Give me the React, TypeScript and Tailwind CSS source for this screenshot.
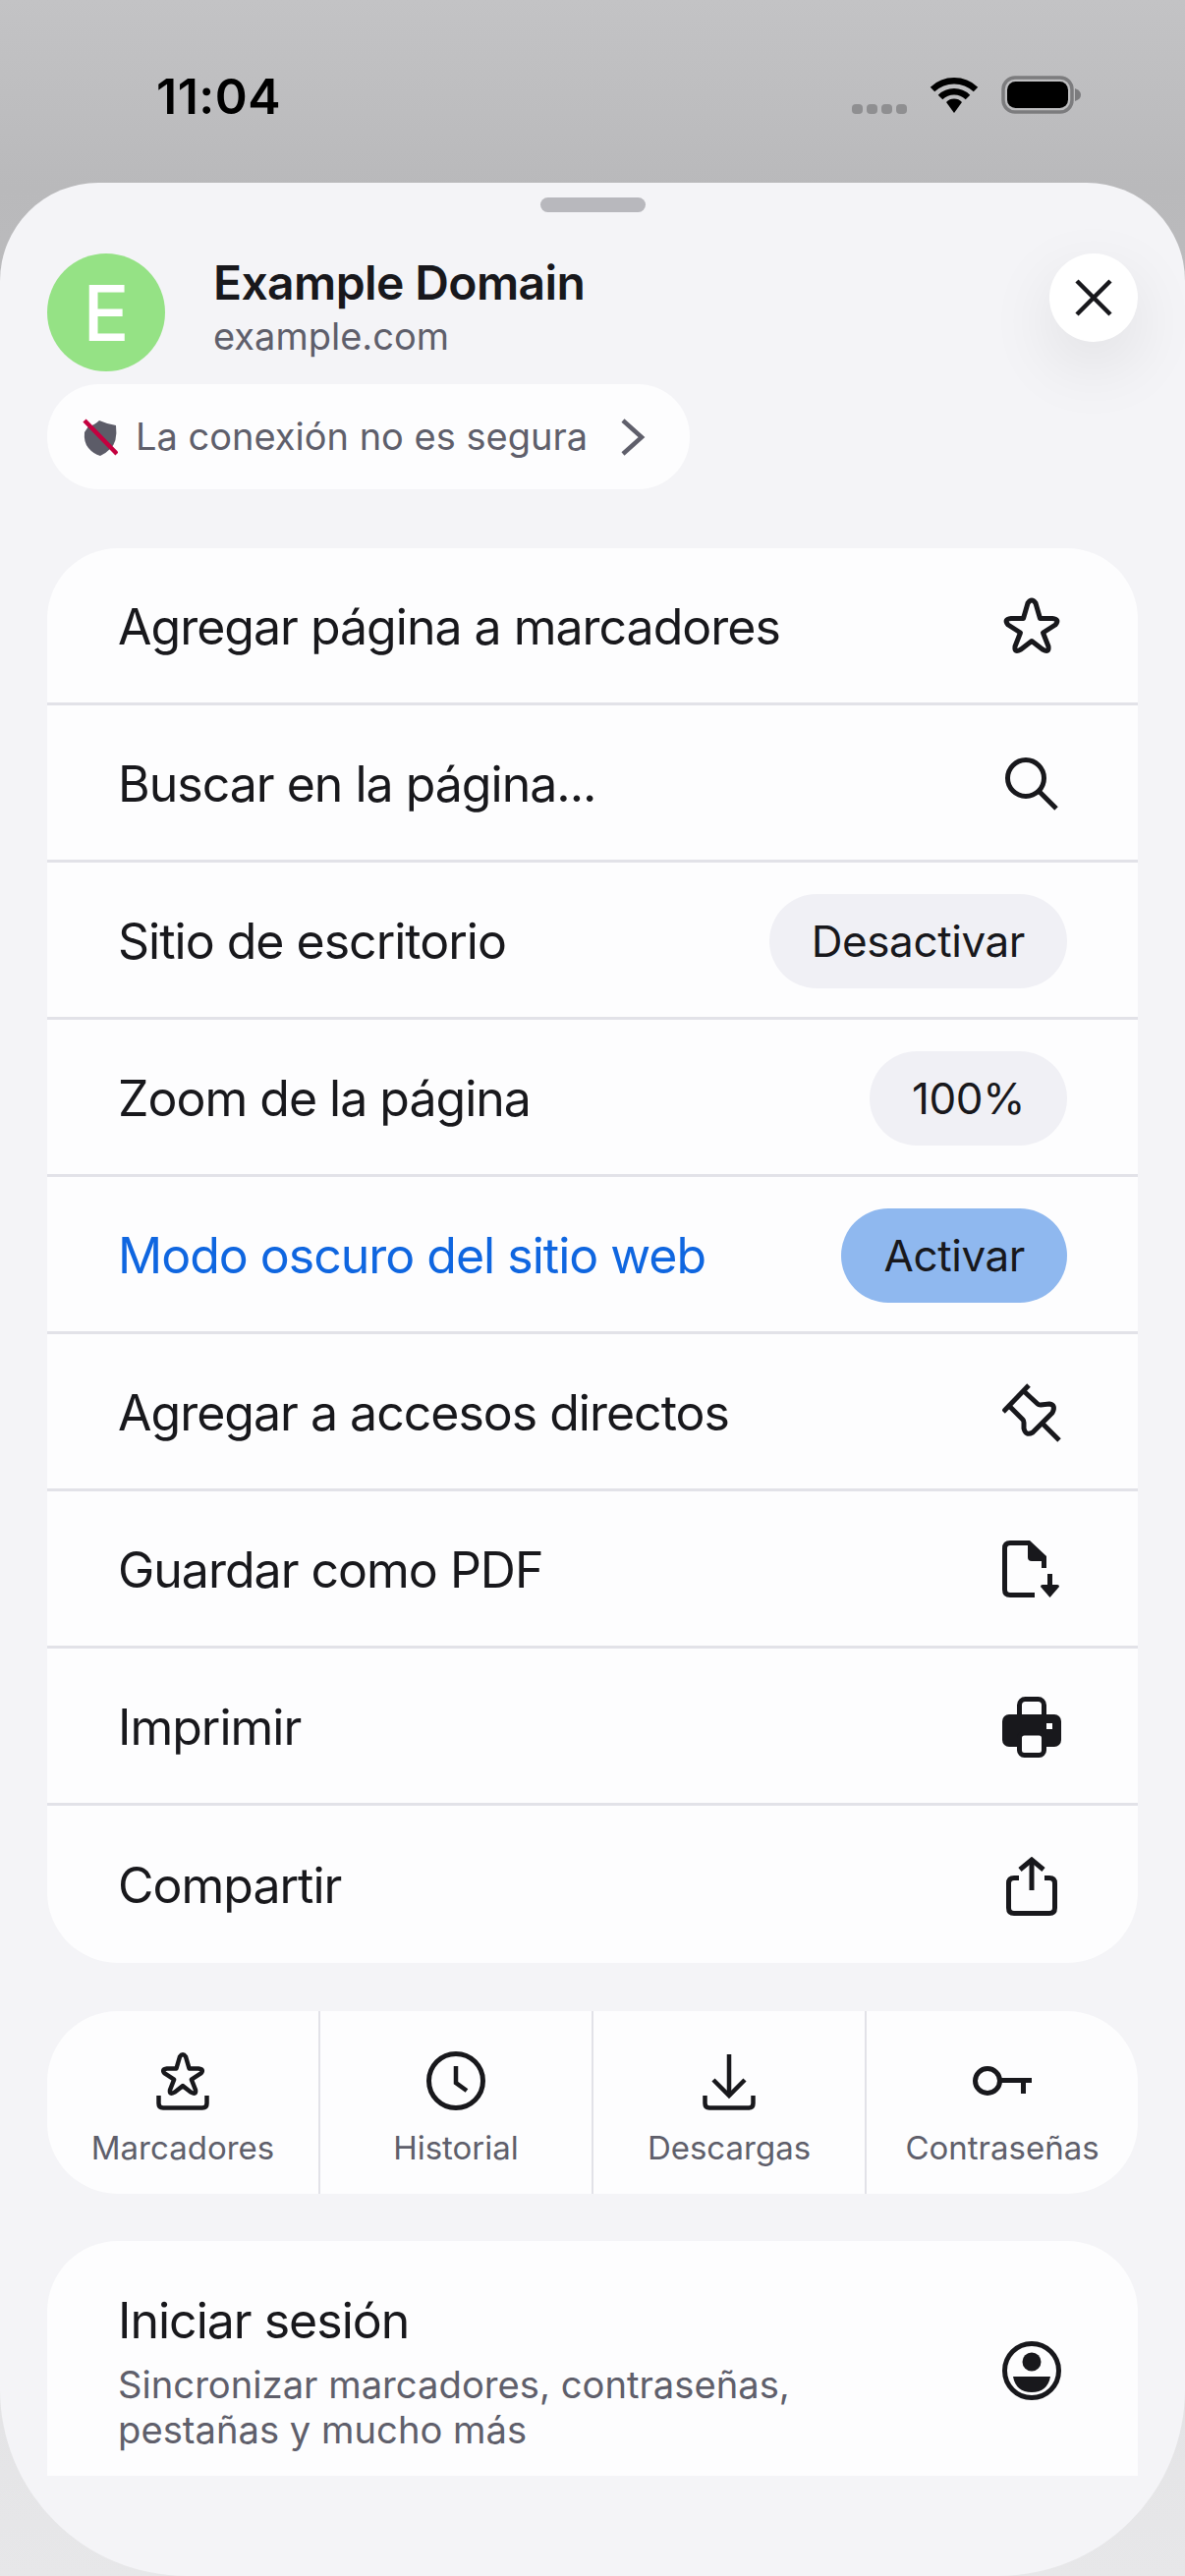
import React from "react";

const INK = "#18181c";
const STAR =
  "M26 6 Q30 0 34 6 L38.5 21.5 L51 21.5 Q59 22.5 54 28 L41.5 36 L47 50 Q48 57 41 53 L30 44.5 L19 53 Q12 57 13 50 L18.5 36 L6 28 Q1 22.5 9 21.5 L21.5 21.5 Z";

function Star() {
  return (
    <svg width="60" height="60" viewBox="0 0 60 60" fill="none" stroke={INK} strokeWidth="5" strokeLinejoin="round">
      <path d={STAR} />
    </svg>
  );
}
function Search() {
  return (
    <svg width="60" height="60" viewBox="0 0 60 60" fill="none" stroke={INK} strokeWidth="5">
      <circle cx="24" cy="24" r="18.5" />
      <path d="M37 37 L55 55" />
    </svg>
  );
}
function Pin() {
  return (
    <svg width="60" height="60" viewBox="0 0 60 60" fill="none" stroke={INK} strokeWidth="5">
      <path d="M27 2 L1 29" />
      <path d="M8 24 L21 37 Q22 38 22 40 L22 46 Q24 54 31 50 L51 30 Q55 22 48 21 L39 22 Q37 22 36 21 L22 8" strokeLinejoin="round" />
      <path d="M40 40 L58 58" />
    </svg>
  );
}
function Pdf() {
  return (
    <svg width="60" height="60" viewBox="0 0 60 60" fill="none">
      <path d="M33 55.5 H8 Q2.5 55.5 2.5 50 V8 Q2.5 2.5 8 2.5 H27 L42.5 17 V28" stroke={INK} strokeWidth="5" />
      <path d="M26 3 H29 L45 18 V21 H30 Q26 21 26 17 Z" fill={INK} />
      <rect x="46" y="34" width="5" height="13" fill={INK} />
      <path d="M39 47 Q39 45 41 45 H56 Q58 45 58 47 L48.5 58 Z" fill={INK} />
    </svg>
  );
}
function Printer() {
  return (
    <svg width="60" height="62" viewBox="0 0 60 62" fill="none">
      <rect x="17.5" y="2.5" width="25" height="30" rx="6" stroke={INK} strokeWidth="5" />
      <rect x="0" y="18" width="60" height="33" rx="7" fill={INK} />
      <rect x="45" y="27" width="6" height="6" fill="#fdfdfe" />
      <rect x="17.5" y="37" width="25" height="22.5" rx="5" fill="#fdfdfe" stroke={INK} strokeWidth="5" />
    </svg>
  );
}
function Share() {
  return (
    <svg width="60" height="60" viewBox="0 0 60 60" fill="none" stroke={INK} strokeWidth="5">
      <path d="M30 3 V34" />
      <path d="M18 13 L30 3 L42 13" />
      <path d="M17 21.5 H12 Q6.5 21.5 6.5 27 V52 Q6.5 57.5 12 57.5 H48 Q53.5 57.5 53.5 52 V27 Q53.5 21.5 48 21.5 H43" />
    </svg>
  );
}
function Bookmarks() {
  return (
    <svg width="60" height="60" viewBox="0 0 60 60" fill="none" stroke={INK} strokeWidth="4.5" strokeLinejoin="round">
      <path d={STAR} transform="translate(7 1) scale(0.767)" strokeWidth="5.8" />
      <path d="M5.5 45 V53 Q5.5 57.5 10 57.5 H50 Q54.5 57.5 54.5 53 V45" />
    </svg>
  );
}
function Clock() {
  return (
    <svg width="60" height="60" viewBox="0 0 60 60" fill="none" stroke={INK} strokeWidth="5">
      <circle cx="30" cy="30" r="27.5" />
      <path d="M30 15 V32 L41 40" strokeWidth="4.5" />
    </svg>
  );
}
function Download() {
  return (
    <svg width="60" height="60" viewBox="0 0 60 60" fill="none" stroke={INK} strokeWidth="4.5">
      <path d="M30 3 V45" />
      <path d="M14 29 L30 45 L46 29" />
      <path d="M5.5 45 V53 Q5.5 57.5 10 57.5 H50 Q54.5 57.5 54.5 53 V45" />
    </svg>
  );
}
function KeyIcon() {
  return (
    <svg width="60" height="60" viewBox="0 0 60 60" fill="none" stroke={INK} strokeWidth="5">
      <circle cx="15" cy="30" r="12.5" />
      <path d="M27 29.5 H60" />
      <path d="M51.5 30 V43" />
    </svg>
  );
}
function Person() {
  return (
    <svg width="60" height="60" viewBox="0 0 60 60" fill="none">
      <circle cx="30" cy="30" r="27.5" stroke={INK} strokeWidth="5" />
      <circle cx="30" cy="21" r="9.5" fill={INK} />
      <path d="M11 36 H49 Q46 52 30 52 Q14 52 11 36 Z" fill={INK} />
    </svg>
  );
}

function Pill({ children, bg }: { children: React.ReactNode; bg: string }) {
  return (
    <span className={`flex h-[96px] items-center rounded-[48px] px-[43px] text-[44px] tracking-[-0.4px] text-[#18181c] ${bg}`}>
      {children}
    </span>
  );
}

function Row({
  label,
  right,
  blue,
  last,
}: {
  label: string;
  right: React.ReactNode;
  blue?: boolean;
  last?: boolean;
}) {
  return (
    <div
      className={`flex h-[160px] items-center justify-between pl-[72px] pr-[72px] pt-[3px] ${
        last ? "" : "border-b-[3px] border-[#e2e2e8]"
      }`}
    >
      <span className={`text-[50px] tracking-[-1px] ${blue ? "text-[#0f66e0]" : "text-[#18181c]"}`}>{label}</span>
      {right}
    </div>
  );
}

function IconSlot({ children }: { children: React.ReactNode }) {
  return <span className="mr-[6px] flex">{children}</span>;
}

function Action({ icon, label, divider }: { icon: React.ReactNode; label: string; divider?: boolean }) {
  return (
    <div
      className={`flex flex-1 flex-col items-center pt-[41px] ${
        divider ? "border-r-[2px] border-[#e2e2e8]" : ""
      }`}
    >
      {icon}
      <span className="mt-[18px] text-[33px] leading-[40px] text-[#5f5f6b]">{label}</span>
    </div>
  );
}

export default function App() {
  return (
    <div className="flex h-[2622px] w-[1206px] flex-col overflow-hidden bg-[linear-gradient(180deg,#c3c3c5_0px,#b9b9bb_190px,#e7e7e9_2622px)] font-['Inter','Noto_Sans',sans-serif]">
      <div className="flex h-[186px] shrink-0 items-start justify-between pl-[159px] pr-[106px] pt-[72px]">
        <span className="text-[50px] font-semibold leading-[52px] tracking-[0.5px] text-black">11:04</span>
        <div className="flex items-start pt-[6px]">
          <div className="mt-[28px] flex gap-[4px]">
            <span className="h-[10px] w-[11px] rounded-[4px] bg-[#8f8f91]" />
            <span className="h-[10px] w-[11px] rounded-[4px] bg-[#8f8f91]" />
            <span className="h-[10px] w-[11px] rounded-[4px] bg-[#8f8f91]" />
            <span className="h-[10px] w-[11px] rounded-[4px] bg-[#8f8f91]" />
          </div>
          <svg className="ml-[23px]" width="50" height="38" viewBox="0 0 50 38" fill="none" stroke="#000" strokeWidth="6.5">
            <path d="M3 13 A32 32 0 0 1 47 13" />
            <path d="M11 21 A20 20 0 0 1 39 21" />
            <path d="M17 26 A11 11 0 0 1 33 26 L25 37 Z" fill="#000" stroke="none" />
          </svg>
          <svg className="ml-[23px] -mt-[1px]" width="81" height="39" viewBox="0 0 81 39" fill="none">
            <rect x="2" y="2" width="70" height="35" rx="12" stroke="#7c7c7e" strokeWidth="3.5" />
            <rect x="6" y="6" width="62" height="27" rx="8.5" fill="#000" />
            <path d="M75 13 Q81 15 81 19.5 Q81 24 75 26 Z" fill="#7c7c7e" />
          </svg>
        </div>
      </div>

      <div className="flex flex-1 flex-col rounded-b-[190px] rounded-t-[100px] bg-[#f4f4f7] px-[48px] pt-[15px]">
        <div className="mx-auto h-[15px] w-[107px] rounded-[8px] bg-[#b8b8bd]" />

        <div className="mt-[42px] flex items-start">
          <div className="flex h-[120px] w-[120px] items-center justify-center rounded-full bg-[#95e285] text-[78px] font-medium text-white">
            E
          </div>
          <div className="ml-[49px] flex flex-1 flex-col pt-[1px]">
            <span className="text-[48px] font-semibold leading-[58px] tracking-[-0.6px] text-[#18181c]">Example Domain</span>
            <span className="text-[38px] leading-[50px] text-[#5f5f6b]">example.com</span>
          </div>
          <div className="flex h-[90px] w-[90px] items-center justify-center rounded-full bg-white shadow-[0_24px_70px_rgba(0,0,0,0.09)]">
            <svg width="38" height="38" viewBox="0 0 38 38" fill="none" stroke={INK} strokeWidth="4.5">
              <path d="M2 2 L36 36 M36 2 L2 36" />
            </svg>
          </div>
        </div>

        <div className="mt-[13px] flex h-[107px] w-[654px] items-center rounded-[53px] bg-[#fdfdfe] pl-[36px]">
          <svg width="36" height="38" viewBox="0 0 36 38" fill="none">
            <path d="M17 2 Q26 6 34 7 Q36 24 28 31 Q23 36 18 38 Q11 36 6 30 Q1 24 2 14 L6 8 Q12 7 17 2 Z" fill="#5c5c68" />
            <path d="M2 2 L35 36" stroke="#c4003f" strokeWidth="4.5" />
          </svg>
          <span className="ml-[18px] text-[38px] text-[#5f5f6b]">La conexión no es segura</span>
          <svg className="ml-[33px]" width="26" height="38" viewBox="0 0 26 38" fill="none" stroke="#5f5f6b" strokeWidth="4.5">
            <path d="M3 2 L22 19 L3 36" />
          </svg>
        </div>

        <div className="mt-[60px] overflow-hidden rounded-[72px] bg-[#fdfdfe]">
          <Row label="Agregar página a marcadores" right={<IconSlot><Star /></IconSlot>} />
          <Row label="Buscar en la página..." right={<IconSlot><Search /></IconSlot>} />
          <Row label="Sitio de escritorio" right={<Pill bg="bg-[#f0f0f5]">Desactivar</Pill>} />
          <Row label="Zoom de la página" right={<Pill bg="bg-[#f0f0f5]">100%</Pill>} />
          <Row label="Modo oscuro del sitio web" blue right={<Pill bg="bg-[#8fb8ef]">Activar</Pill>} />
          <Row label="Agregar a accesos directos" right={<IconSlot><Pin /></IconSlot>} />
          <Row label="Guardar como PDF" right={<IconSlot><Pdf /></IconSlot>} />
          <Row label="Imprimir" right={<IconSlot><Printer /></IconSlot>} />
          <Row label="Compartir" last right={<IconSlot><Share /></IconSlot>} />
        </div>

        <div className="mt-[49px] flex h-[186px] overflow-hidden rounded-[72px] bg-[#fdfdfe]">
          <Action icon={<Bookmarks />} label="Marcadores" divider />
          <Action icon={<Clock />} label="Historial" divider />
          <Action icon={<Download />} label="Descargas" divider />
          <Action icon={<KeyIcon />} label="Contraseñas" />
        </div>

        <div className="mt-[48px] flex h-[239px] items-start justify-between rounded-t-[72px] bg-[#fdfdfe] pl-[72px] pr-[78px] pt-[52px]">
          <div className="flex flex-col">
            <span className="text-[50px] leading-[58px] tracking-[-1px] text-[#18181c]">Iniciar sesión</span>
            <span className="mt-[13px] text-[38.2px] leading-[46px] text-[#5f5f6b]">
              Sincronizar marcadores, contraseñas,
              <br />
              pestañas y mucho más
            </span>
          </div>
          <div className="mt-[50px]">
            <Person />
          </div>
        </div>
      </div>
    </div>
  );
}
